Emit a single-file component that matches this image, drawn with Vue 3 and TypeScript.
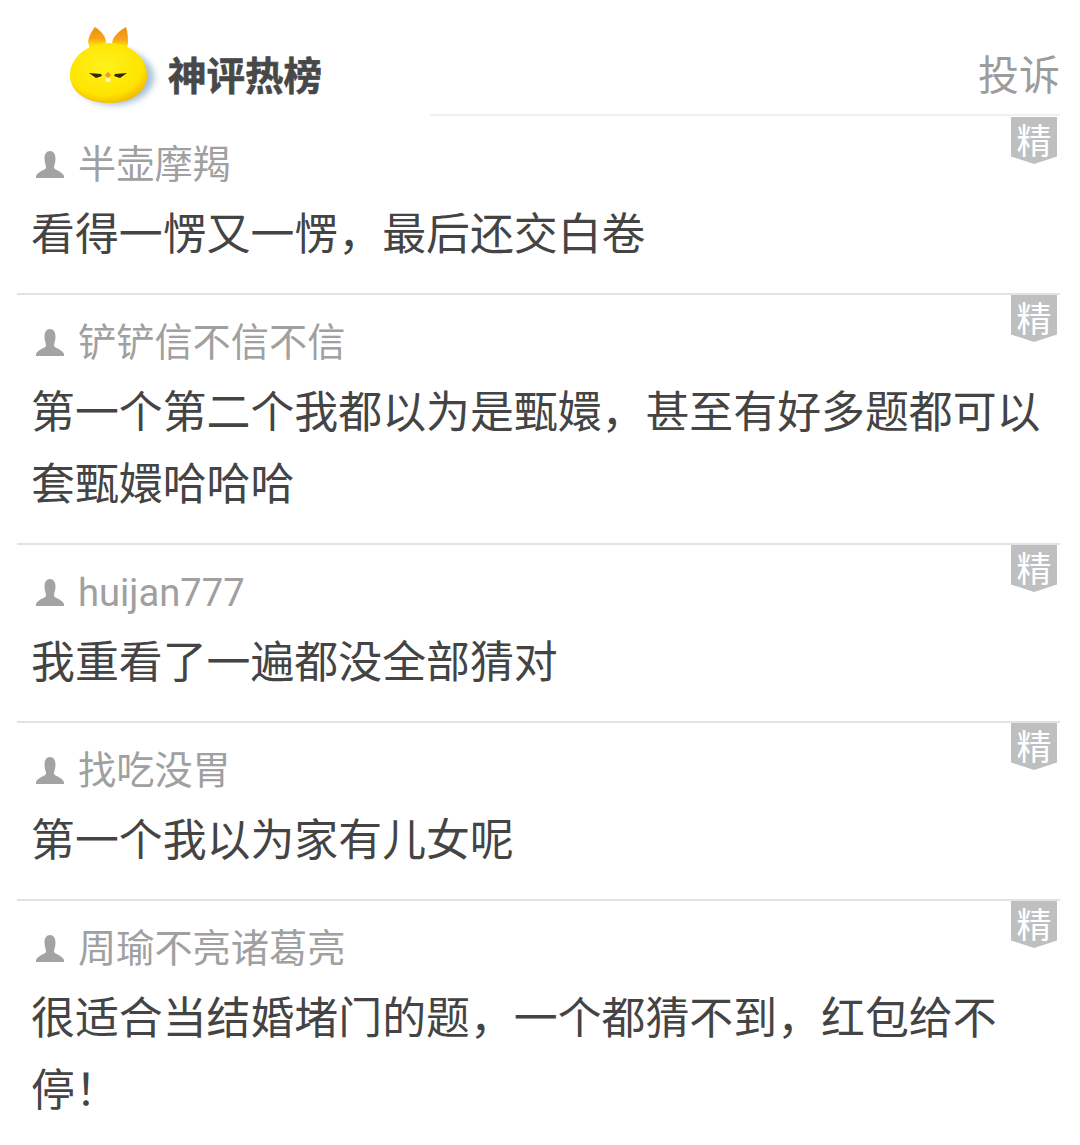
<template>
  <div class="page">
    <header class="top">
      <div class="brand">
        <svg class="bunny" viewBox="65 22 95 90" width="95" height="90">
          <defs>
            <radialGradient id="bodyFill" cx="0.45" cy="0.38" r="0.68">
              <stop offset="0" stop-color="#fff21a" />
              <stop offset="0.72" stop-color="#fee400" />
              <stop offset="1" stop-color="#f0b000" />
            </radialGradient>
            <linearGradient id="earFill" x1="0" y1="0" x2="0" y2="1">
              <stop offset="0" stop-color="#f08c1c" />
              <stop offset="0.4" stop-color="#f7a414" />
              <stop offset="0.58" stop-color="#fcd808" />
              <stop offset="1" stop-color="#fde600" />
            </linearGradient>
            <filter id="soft" x="-30%" y="-30%" width="160%" height="160%">
              <feGaussianBlur stdDeviation="3" />
            </filter>
          </defs>
          <ellipse cx="114" cy="77" rx="40" ry="28" fill="#a9c0d6" filter="url(#soft)" />
          <path d="M88 42 C89 35 92 31 95 27 C101 31 106 36 106 43 L105 56 L92 56 Z" fill="url(#earFill)" />
          <path d="M112 43 C113 36 119 31 126 27 C128 33 128 38 128 44 L123 58 L114 56 Z" fill="url(#earFill)" />
          <path d="M70 75 C70 57 88 43 109 43 C131 43 147 58 147 75 C147 93 130 103 109 103 C88 103 70 93 70 75 Z" fill="url(#bodyFill)" />
          <path d="M89 73 L101 74 L102 76 L96 78 Z" fill="#33280c" />
          <path d="M127 73 L115 74 L114 76 L120 78 Z" fill="#33280c" />
          <path d="M105 75 L108 72 L111 75 L108 78 Z" fill="#f39a1c" />
          <ellipse cx="108" cy="80" rx="2.600" ry="2.200" fill="#fff3c8" />
        </svg>
        <span class="brand-name">神评热榜</span>
      </div>
      <div class="report"><span>投诉</span></div>
    </header>

    <ul class="list">
      <li v-for="item in comments" :key="item.name" class="row">
        <div class="author">
          <svg class="avatar" viewBox="0 0 28 27" width="28" height="27">
            <path d="M14 0 C17.500 0 19.500 3 19.500 7.500 C19.500 12 18 14 18 16.500 C18 19 26 20 28 25 L28 27 L0 27 L0 25 C2 20 10 19 10 16.500 C10 14 8.500 12 8.500 7.500 C8.500 3 10.500 0 14 0 Z" fill="#a3a3a3" />
          </svg>
          <span class="author-name">{{ item.name }}</span>
        </div>
        <p class="text">{{ item.text }}</p>
        <div class="badge">精</div>
      </li>
    </ul>
  </div>
</template>

<script setup lang="ts">
interface Comment {
  name: string;
  text: string;
}

const comments: Comment[] = [
  { name: "半壶摩羯", text: "看得一愣又一愣，最后还交白卷" },
  { name: "铲铲信不信不信", text: "第一个第二个我都以为是甄嬛，甚至有好多题都可以套甄嬛哈哈哈" },
  { name: "huijan777", text: "我重看了一遍都没全部猜对" },
  { name: "找吃没胃", text: "第一个我以为家有儿女呢" },
  { name: "周瑜不亮诸葛亮", text: "很适合当结婚堵门的题，一个都猜不到，红包给不停！" },
];
</script>

<style>
html,
body {
  background: #fff;
}
</style>

<style scoped>
.page {
  width: 1080px;
  height: 1145px;
  overflow: hidden;
  font-family: "Noto Sans CJK SC", "Noto Sans", sans-serif;
}

.top {
  display: flex;
  height: 116px;
}

.brand {
  width: 430px;
  display: flex;
  align-items: flex-start;
  padding: 22px 0 0 65px;
  box-sizing: border-box;
}

.bunny {
  flex: none;
}

.brand-name {
  margin: 23px 0 0 8px;
  font-size: 38.500px;
  line-height: 56px;
  font-weight: 700;
  color: #484848;
  -webkit-text-stroke: 0.6px #484848;
}

.report {
  flex: 1;
  margin-right: 20px;
  border-bottom: 2px solid #f1f1f1;
  display: flex;
  justify-content: flex-end;
  font-size: 41px;
  line-height: 60px;
  padding-top: 42px;
  color: #9c9c9c;
  box-sizing: border-box;
}

.list {
  list-style: none;
  margin: 1px 20px 0 17px;
  padding: 0;
}

.row {
  position: relative;
  padding: 14px 0 26px 14px;
  border-bottom: 2px solid #e2e2e2;
}

.author {
  display: flex;
  align-items: center;
  height: 60px;
  margin-bottom: 4px;
  font-family: Roboto, "Noto Sans CJK SC", sans-serif;
  font-size: 38.200px;
  color: #a0a0a0;
}

.author-name {
  line-height: 60px;
  margin-top: 7px;
}

.avatar {
  flex: none;
  margin: 6px 14px 0 5px;
}

.text {
  margin: 0;
  font-size: 43.900px;
  line-height: 72px;
  color: #444;
}

.badge {
  position: absolute;
  top: 0;
  right: 3px;
  width: 46px;
  height: 47px;
  background: #bfbfbf;
  clip-path: polygon(0 0, 100% 0, 100% 84%, 50% 100%, 0 84%);
  color: #fff;
  font-size: 35px;
  line-height: 44px;
  text-align: center;
}
</style>
